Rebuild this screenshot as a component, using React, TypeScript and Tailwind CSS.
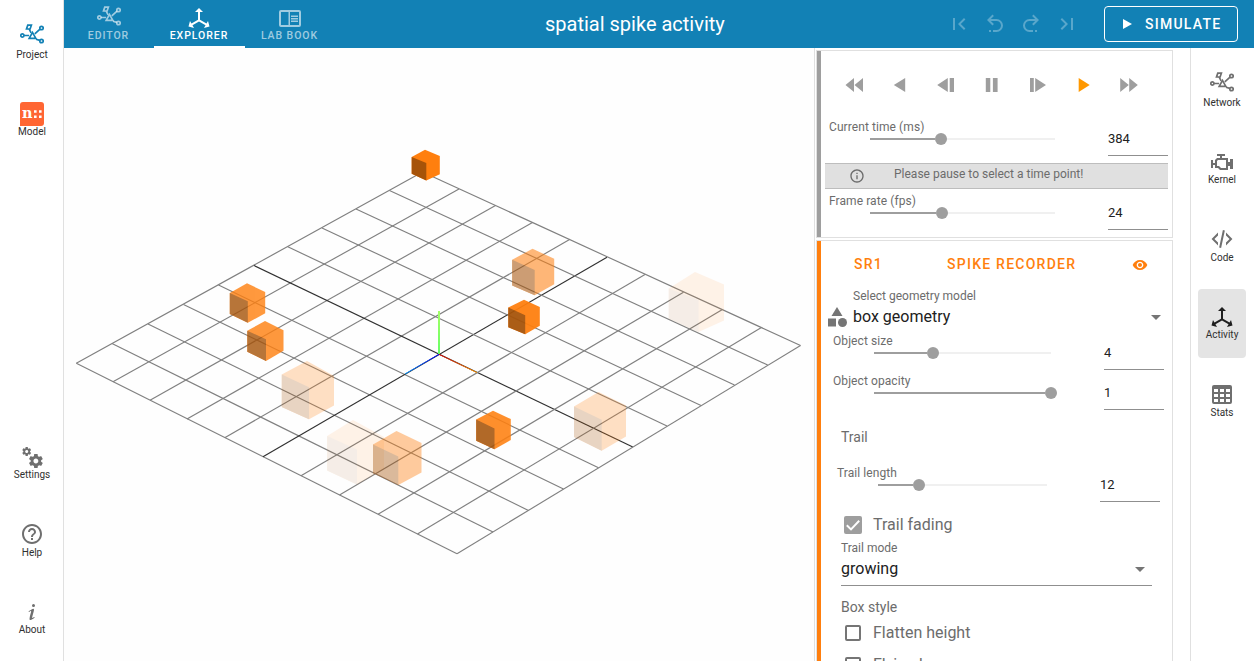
import type { ReactNode } from "react";
import { MdCategory, MdFirstPage, MdHelpOutline, MdInfoOutline, MdLastPage, MdVisibility } from "react-icons/md";

const paths = {
  axis: "M12,2L16,6H13V13.85L19.53,17.61L21,15.03L22.5,20.5L17,21.96L18.53,19.35L12,15.58L5.47,19.35L7,21.96L1.5,20.5L3,15.03L4.47,17.61L11,13.85V6H8L12,2Z",
  book: "M13,12H20V13.5H13M13,9.5H20V11H13M13,14.5H20V16H13M21,4H3A2,2 0 0,0 1,6V19A2,2 0 0,0 3,21H21A2,2 0 0,0 23,19V6A2,2 0 0,0 21,4M21,19H12V6H21M3,6H10.5V19H3Z",
  engine:
    "M8,10H16V18H11L9,16H7V11M7,4V6H10V8H7L5,10V13H3V10H1V18H3V15H5V18H8L10,20H18V16H20V19H23V9H20V12H18V8H12V6H15V4H7Z",
  code: "M12.89,3L14.85,3.4L11.11,21L9.15,20.6L12.89,3M19.59,12L16,8.41V5.58L22.42,12L16,18.41V15.58L19.59,12M1.58,12L8,5.58V8.41L4.41,12L8,15.58V18.41L1.58,12Z",
  table:
    "M4,3H20A2,2 0 0,1 22,5V20A2,2 0 0,1 20,22H4A2,2 0 0,1 2,20V5A2,2 0 0,1 4,3M4,7V10H8V7H4M10,7V10H14V7H10M20,10V7H16V10H20M4,12V15H8V12H4M4,20H8V17H4V20M10,12V15H14V12H10M10,20H14V17H10V20M20,20V17H16V20H20M20,12H16V15H20V12Z",
  cogs: "M15.9,18.45C17.25,18.45 18.35,17.35 18.35,16C18.35,14.65 17.25,13.55 15.9,13.55C14.54,13.55 13.45,14.65 13.45,16C13.45,17.35 14.54,18.45 15.9,18.45M21.1,16.68L22.58,17.84C22.71,17.95 22.75,18.13 22.66,18.29L21.26,20.71C21.17,20.86 21,20.92 20.83,20.86L19.09,20.16C18.73,20.44 18.33,20.67 17.91,20.85L17.64,22.7C17.62,22.87 17.47,23 17.3,23H14.5C14.32,23 14.18,22.87 14.15,22.7L13.89,20.85C13.46,20.67 13.07,20.44 12.71,20.16L10.96,20.86C10.81,20.92 10.62,20.86 10.54,20.71L9.14,18.29C9.05,18.13 9.09,17.95 9.22,17.84L10.7,16.68L10.65,16L10.7,15.31L9.22,14.16C9.09,14.05 9.05,13.86 9.14,13.71L10.54,11.29C10.62,11.13 10.81,11.07 10.96,11.13L12.71,11.84C13.07,11.56 13.46,11.32 13.89,11.15L14.15,9.29C14.18,9.13 14.32,9 14.5,9H17.3C17.47,9 17.62,9.13 17.64,9.29L17.91,11.15C18.33,11.32 18.73,11.56 19.09,11.84L20.83,11.13C21,11.07 21.17,11.13 21.26,11.29L22.66,13.71C22.75,13.86 22.71,14.05 22.58,14.16L21.1,15.31L21.15,16L21.1,16.68M6.69,8.07C7.56,8.07 8.26,7.37 8.26,6.5C8.26,5.63 7.56,4.92 6.69,4.92A1.58,1.58 0 0,0 5.11,6.5C5.11,7.37 5.82,8.07 6.69,8.07M10.03,6.94L11,7.68C11.07,7.75 11.09,7.87 11.03,7.97L10.13,9.53C10.08,9.63 9.96,9.67 9.86,9.63L8.74,9.18L8,9.62L7.81,10.81C7.79,10.92 7.7,11 7.59,11H5.79C5.67,11 5.58,10.92 5.56,10.81L5.4,9.62L4.64,9.18L3.5,9.63C3.41,9.67 3.3,9.63 3.24,9.53L2.34,7.97C2.28,7.87 2.31,7.75 2.39,7.68L3.34,6.94L3.31,6.5L3.34,6.06L2.39,5.32C2.31,5.25 2.28,5.13 2.34,5.03L3.24,3.47C3.3,3.37 3.41,3.33 3.5,3.37L4.63,3.82L5.4,3.38L5.56,2.19C5.58,2.08 5.67,2 5.79,2H7.59C7.7,2 7.79,2.08 7.81,2.19L8,3.38L8.74,3.82L9.86,3.37C9.96,3.33 10.08,3.37 10.13,3.47L11.03,5.03C11.09,5.13 11.07,5.25 11,5.32L10.03,6.06L10.06,6.5L10.03,6.94Z",
  about:
    "M13.5,4A1.5,1.5 0 0,0 12,5.5A1.5,1.5 0 0,0 13.5,7A1.5,1.5 0 0,0 15,5.5A1.5,1.5 0 0,0 13.5,4M13.14,8.77C11.95,8.87 8.7,11.46 8.7,11.46C8.5,11.61 8.56,11.6 8.72,11.88C8.88,12.15 8.86,12.17 9.05,12.04C9.25,11.91 9.58,11.7 10.13,11.36C12.25,10 10.47,13.14 9.56,18.43C9.2,21.05 11.56,19.7 12.17,19.3C12.77,18.91 14.38,17.8 14.54,17.69C14.76,17.54 14.6,17.42 14.43,17.17C14.31,17 14.19,17.12 14.19,17.12C13.54,17.55 12.35,18.45 12.19,17.88C12,17.31 13.22,13.4 13.89,10.71C14,10.07 14.3,8.67 13.14,8.77Z",
  undo: "M13.5,7A6.5,6.5 0 0,1 20,13.5A6.5,6.5 0 0,1 13.5,20H10V18H13.5C16,18 18,16 18,13.5C18,11 16,9 13.5,9H7.83L10.91,12.09L9.5,13.5L4,8L9.5,2.5L10.92,3.91L7.83,7H13.5M6,18H8V20H6V18Z",
  redo: "M10.5,7A6.5,6.5 0 0,0 4,13.5A6.5,6.5 0 0,0 10.5,20H14V18H10.5C8,18 6,16 6,13.5C6,11 8,9 10.5,9H16.17L13.09,12.09L14.5,13.5L20,8L14.5,2.5L13.08,3.91L16.17,7H10.5M18,18H16V20H18V18Z",
};

function Icon({ d, className = "size-6" }: { d: string; className?: string }) {
  return (
    <svg viewBox="0 0 24 24" className={className} fill="currentColor" fillRule="evenodd">
      <path d={d} />
    </svg>
  );
}

function NetworkIcon() {
  return (
    <svg viewBox="0 0 24 24" className="size-6" fill="none" stroke="currentColor" strokeWidth="1.7">
      <circle cx="2.4" cy="11.5" r="1.6" />
      <circle cx="21.5" cy="4" r="1.7" />
      <circle cx="21.5" cy="17" r="1.7" />
      <path d="M7.8 1.2h3.6l-1.3 3.8H6.5zM9.2 5.2l1.9 3.6M4.1 11.5h5M14.8 9.8l5.2-4.7M16 15.2l3.8 1.2" />
      <path d="M12.5 8.4l-3.3 6h6.6z" />
    </svg>
  );
}

function ModelIcon() {
  return (
    <svg viewBox="0 0 24 24" className="size-6">
      <path d="M3 0h18a3 3 0 0 1 3 3v18a3 3 0 0 1-3 3H0V3a3 3 0 0 1 3-3z" fill="#ff6633" />
      <text x="2" y="16" fontSize="15" fontWeight="bold" fontFamily="DejaVu Serif, serif" textLength="10.5" lengthAdjust="spacingAndGlyphs" fill="#fff">
        n
      </text>
      <path d="M14 8.2h2.6v2.6H14zM19 8.2h2.6v2.6H19zM14 13.4h2.6V16H14zM19 13.4h2.6V16H19z" fill="#fff" />
    </svg>
  );
}

function NavItem({ label, active, children }: { label: string; active?: boolean; children: ReactNode }) {
  return (
    <div
      className={`flex h-[69.5px] w-12 shrink-0 flex-col items-center rounded pt-4 ${active ? "bg-[#e4e4e4] text-[#1f1f1f]" : "text-[#6f6f6f]"}`}
    >
      {children}
      <span className="mt-[0.5px] text-[10px] leading-3 text-[#303030]">{label}</span>
    </div>
  );
}

function Tab({ label, active, children }: { label: string; active?: boolean; children: ReactNode }) {
  return (
    <div
      className={`flex h-12 shrink-0 flex-col items-center border-b-2 pt-1.5 pr-[17px] pl-4 ${active ? "w-[91px] border-white text-white" : "w-[90px] border-transparent text-white/60"}`}
    >
      {children}
      <span className="text-[10.5px] leading-3 font-medium tracking-[0.94px] whitespace-nowrap">{label}</span>
    </div>
  );
}

/* Vertices along the four edges of the floor grid, in canvas coordinates. */
const leftTop = [[76.3, 363.3], [112, 343.5], [148, 324], [183.5, 304.5], [218.5, 285], [254, 265.5], [287.8, 246.8], [322, 228], [356, 209], [389.5, 190.5], [422.5, 172]];
const bottomRight = [[457, 553.7], [493, 532], [528.5, 510.5], [563.5, 489], [598.5, 467.8], [632.8, 447], [667, 426], [701, 405.5], [734.5, 385], [767.7, 365], [800.5, 345.5]];
const leftBottom = [[76.3, 363.3], [113, 381.7], [150, 400.2], [187, 419], [224.7, 437.7], [263, 456.7], [301, 475.7], [339.5, 495], [378, 514.3], [417.5, 534], [457, 553.7]];
const topRight = [[422.5, 172], [459, 189], [495.5, 205.5], [532.5, 222.5], [570, 239.3], [607, 257.2], [645, 274.5], [683.5, 292.3], [722, 309.7], [761, 327.8], [800.5, 345.5]];

/* x: left, middle, right; y: top, left shoulder, right shoulder, center, left foot, right foot, bottom */
const cubes = [
  { x: [668.8, 698.5, 724], y: [272, 288.5, 284.5, 300, 318.5, 320.5, 332], top: 695, a: 0.09 },
  { x: [327.2, 357, 384], y: [420, 436, 437, 449.5, 470.5, 469, 484.5], top: 353, a: 0.09 },
  { x: [281.8, 309, 334], y: [361, 374.5, 376, 387.3, 407, 405.5, 419.3], top: 307, a: 0.24 },
  { x: [574, 601.7, 626], y: [392, 406.5, 405.5, 419.7, 437, 436.5, 450.7], top: 598.5, a: 0.24 },
  { x: [373, 398.3, 421.5], y: [431, 444.5, 443, 456.5, 473, 472.5, 485], top: 396.5, a: 0.4 },
  { x: [512.2, 534.7, 554.2], y: [248.7, 259.8, 258.8, 270, 285.5, 284.3, 295.2], top: 532.5, a: 0.56 },
  { x: [229.8, 247.8, 265.2], y: [283.3, 293, 292, 301.3, 314, 313.3, 322.8], top: 247, a: 0.8 },
  { x: [247.3, 266, 283.5], y: [321, 330.8, 330.3, 339.3, 351.7, 350.7, 361], top: 265, a: 0.8 },
  { x: [476.2, 494.5, 510.8], y: [410.8, 419.5, 419, 428.5, 440.7, 440, 449.3], top: 493, a: 0.87 },
  { x: [508.3, 525.2, 539.8], y: [299.7, 307.5, 307, 315.3, 327.3, 325.7, 334.3], top: 524, a: 0.94 },
  { x: [411.7, 426.3, 439.8], y: [149.7, 157, 156, 163, 173.7, 174.3, 180.5], top: 425, a: 1 },
];

function Scene() {
  return (
    <svg viewBox="64 48 750 613" className="h-full w-full" fill="none">
      <defs>
        <linearGradient id="axis-x" gradientUnits="userSpaceOnUse" x1="439" y1="354" x2="477" y2="373">
          <stop stopColor="#e00000" />
          <stop offset="1" stopColor="#ff9a00" />
        </linearGradient>
        <linearGradient id="axis-z" gradientUnits="userSpaceOnUse" x1="439" y1="354" x2="405" y2="374">
          <stop stopColor="#0000ff" />
          <stop offset="1" stopColor="#0099ff" />
        </linearGradient>
        <linearGradient id="axis-y" gradientUnits="userSpaceOnUse" x1="439" y1="354" x2="439" y2="311">
          <stop stopColor="#66ff66" />
          <stop offset="1" stopColor="#a5ff66" />
        </linearGradient>
      </defs>
      {leftTop.map((p, i) => (
        <g key={i} stroke={i === 5 ? "#303030" : "#808080"} strokeWidth="1.15">
          <line x1={p[0]} y1={p[1]} x2={bottomRight[i][0]} y2={bottomRight[i][1]} />
          <line x1={leftBottom[i][0]} y1={leftBottom[i][1]} x2={topRight[i][0]} y2={topRight[i][1]} />
        </g>
      ))}
      <path d="M439 354.3L477 372.6" stroke="url(#axis-x)" />
      <path d="M439 354.3L405 374" stroke="url(#axis-z)" />
      <rect x="438" y="311" width="2" height="43" fill="url(#axis-y)" />
      {cubes.map(({ x, y, top, a }) => (
        <g key={top} opacity={a}>
          <path
            d={`M${top} ${y[0]}L${x[2]} ${y[2]}V${y[5]}L${x[1]} ${y[6]}L${x[0]} ${y[4]}V${y[1]}Z`}
            fill="#ff7f0e"
          />
          <path d={`M${x[0]} ${y[1]}L${x[1]} ${y[3]}V${y[6]}L${x[0]} ${y[4]}Z`} fill="#a65309" />
        </g>
      ))}
    </svg>
  );
}

const playback = [
  { d: "M12 5v14L3.5 12zM21 5v14l-8.5-7z", on: false },
  { d: "M17.2 5v14L5.8 12z", on: false },
  { d: "M13.8 5v14L3.2 12zM15.7 5h4.3v14h-4.3z", on: false },
  { d: "M5.8 5h4.5v14H5.8zM12.9 5h4.7v14h-4.7z", on: false },
  { d: "M4 5h3.8v14H4zM9.2 5v14l10.8-7z", on: false },
  { d: "M7.7 5v14l11-7z", on: true },
  { d: "M3.2 5v14l8.6-7zM12.2 5v14l8.6-7z", on: false },
];

function SliderRow({ label, value, fill }: { label: string; value: string; fill: number }) {
  return (
    <div className="flex h-11 items-start">
      <div className="min-w-0 flex-1">
        <div className="h-4 text-[12px] leading-4 tracking-[0.08px] text-[#6c6c6c]">{label}</div>
        <div className="ml-[41px] flex h-2 items-center">
          <div className="h-0.5 shrink-0 bg-[#9e9e9e]" style={{ width: `calc(${fill}% - 6px)` }} />
          <div className="size-3 shrink-0 rounded-full bg-[#9e9e9e]" />
          <div className="h-0.5 min-w-0 flex-1 bg-[#f0f0f0]" />
        </div>
      </div>
      <div className="ml-[53px] h-[37px] w-[60px] border-b border-[#8f8f8f] pt-3 text-[13px] leading-4 text-[#212121]">{value}</div>
    </div>
  );
}

function Caret() {
  return (
    <svg viewBox="0 0 10 5" className="h-[5px] w-2.5" fill="#757575">
      <path d="M0 0h10L5 5z" />
    </svg>
  );
}

function Check({ label, checked }: { label: string; checked?: boolean }) {
  return (
    <div className="flex h-7 items-center text-[16px] text-[#6c6c6c]">
      <div className="flex w-8 justify-start pl-[3px]">
        {checked ? (
          <div className="flex size-[18px] items-center justify-center rounded-xs bg-[#9e9e9e]">
            <svg viewBox="0 0 18 18" className="size-[18px]" fill="none" stroke="#fff" strokeWidth="2">
              <path d="M2.8 9.2l4.2 4.2 8.2-8.6" />
            </svg>
          </div>
        ) : (
          <div className="ml-px size-4 rounded-xs border-2 border-[#757575]" />
        )}
      </div>
      {label}
    </div>
  );
}

export default function App() {
  return (
    <div className="flex h-[661px] w-[1254px] overflow-hidden bg-white" style={{ fontFamily: 'Roboto, "Liberation Sans", sans-serif' }}>
      <nav className="flex w-16 shrink-0 flex-col items-center gap-2 border-r border-[#e0e0e0] py-2 pl-px">
        <NavItem label="Project">
          <div className="h-6 text-[#1281b5]">
            <NetworkIcon />
          </div>
        </NavItem>
        <NavItem label="Model">
          <ModelIcon />
        </NavItem>
        <div className="flex-1" />
        <NavItem label="Settings">
          <Icon d={paths.cogs} />
        </NavItem>
        <NavItem label="Help">
          <MdHelpOutline className="size-6" />
        </NavItem>
        <NavItem label="About">
          <Icon d={paths.about} />
        </NavItem>
      </nav>

      <div className="flex min-w-0 flex-1 flex-col">
        <header className="flex h-12 shrink-0 items-center bg-[#1281b5] pr-4 text-white">
          <Tab label="EDITOR">
            <NetworkIcon />
          </Tab>
          <Tab label="EXPLORER" active>
            <Icon d={paths.axis} />
          </Tab>
          <Tab label="LAB BOOK">
            <Icon d={paths.book} />
          </Tab>
          <div className="flex-1 pl-[210px] text-[20px] leading-6">spatial spike activity</div>
          <div className="mr-[25.5px] flex gap-3 text-white/30">
            <MdFirstPage className="size-6" />
            <Icon d={paths.undo} />
            <Icon d={paths.redo} />
            <MdLastPage className="size-6" />
          </div>
          <div className="flex h-9 w-[134px] items-center rounded border border-white pl-[18px]">
            <svg viewBox="0 0 9 10" className="h-2.5 w-[9px]" fill="currentColor">
              <path d="M0 0l9 5-9 5z" />
            </svg>
            <span className="ml-[13px] text-[14px] leading-5 font-medium tracking-[1.25px]">SIMULATE</span>
          </div>
        </header>

        <div className="flex min-h-0 flex-1">
          <main className="w-[750px] shrink-0 bg-[#fefefe]">
            <Scene />
          </main>

          <aside className="flex w-[376px] shrink-0 flex-col gap-0.5 overflow-hidden border-l border-[#e0e0e0] pt-0.5 pr-[17px] pl-px">
            <section className="flex h-[188px] shrink-0 border border-[#e0e0e0]">
              <div className="w-1 bg-[#9e9e9e]" />
              <div className="min-w-0 flex-1 pr-1">
                <div className="flex h-[68px] items-center pl-[10.5px]">
                  {playback.map(({ d, on }, i) => (
                    <div key={i} className={`flex w-[45.8px] justify-center ${on ? "text-[#ff9800]" : "text-[#9e9e9e]"}`}>
                      <Icon d={d} />
                    </div>
                  ))}
                </div>
                <div className="pl-2">
                  <SliderRow label="Current time (ms)" value="384" fill={38.4} />
                </div>
                <div className="ml-1 flex h-[26px] items-center border-y border-[#bdbdbd] bg-[#e0e0e0] text-[#6c6c6c]">
                  <MdInfoOutline className="ml-6 size-4" />
                  <span className="mb-1 ml-[29px] text-[12px] leading-4">Please pause to select a time point!</span>
                </div>
                <div className="pt-1 pl-2">
                  <SliderRow label="Frame rate (fps)" value="24" fill={38.8} />
                </div>
              </div>
            </section>

            <section className="flex h-[460px] shrink-0 border border-[#e0e0e0]">
              <div className="w-1 bg-[#ff7f0e]" />
              <div className="min-w-0 flex-1">
                <div className="flex h-[46px] items-center pl-[33px] text-[14px] font-medium tracking-[1.25px] text-[#ff7f0e]">
                  <span className="w-[93px]">SR1</span>
                  <span className="w-[185px]">SPIKE RECORDER</span>
                  <MdVisibility className="mt-0.5 size-4" />
                </div>
                <div className="flex h-[46px] pl-1">
                  <MdCategory className="mt-[18px] size-6 text-[#757575]" />
                  <div className="ml-1 flex-1">
                    <div className="pt-px pb-px text-[12px] leading-4 text-[#6c6c6c]">Select geometry model</div>
                    <div className="text-[16px] leading-6 text-[#212121]">box geometry</div>
                  </div>
                  <div className="mt-7 mr-[11px]">
                    <Caret />
                  </div>
                </div>
                <div className="pr-2 pl-3">
                  <div className="h-10">
                    <SliderRow label="Object size" value="4" fill={33.3} />
                  </div>
                  <SliderRow label="Object opacity" value="1" fill={100} />
                </div>
                <div className="pt-2.5 pl-5 text-[14px] leading-5 text-[#6c6c6c]">Trail</div>
                <div className="pt-[18px] pr-3 pl-4">
                  <SliderRow label="Trail length" value="12" fill={24.2} />
                </div>
                <div className="pr-5 pl-5">
                  <div className="pt-0.5">
                    <Check label="Trail fading" checked />
                  </div>
                  <div className="h-[47px] border-b border-[#8f8f8f]">
                    <div className="pt-px pb-px text-[12px] leading-4 text-[#6c6c6c]">Trail mode</div>
                    <div className="flex items-center justify-between pr-[7px] text-[16px] leading-6 text-[#212121]">
                      growing
                      <Caret />
                    </div>
                  </div>
                  <div className="pt-[11px] pb-0.5 text-[14px] leading-5 text-[#6c6c6c]">Box style</div>
                  <div className="flex flex-col gap-1">
                    <Check label="Flatten height" />
                    <Check label="Flying boxes" />
                  </div>
                </div>
              </div>
            </section>
          </aside>

          <nav className="flex min-w-0 flex-1 flex-col items-center gap-2 border-l border-[#e0e0e0] pt-2 pr-px">
            <NavItem label="Network">
              <NetworkIcon />
            </NavItem>
            <NavItem label="Kernel">
              <Icon d={paths.engine} />
            </NavItem>
            <NavItem label="Code">
              <Icon d={paths.code} />
            </NavItem>
            <NavItem label="Activity" active>
              <Icon d={paths.axis} />
            </NavItem>
            <NavItem label="Stats">
              <Icon d={paths.table} />
            </NavItem>
          </nav>
        </div>
      </div>
    </div>
  );
}
